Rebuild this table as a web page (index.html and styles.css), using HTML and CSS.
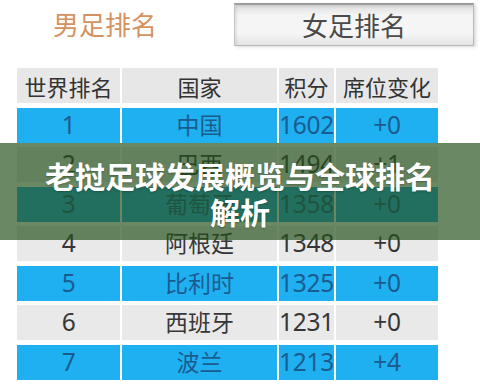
FILE: index.html
```html
<!DOCTYPE html>
<html lang="zh">
<head>
<meta charset="utf-8">
<title>老挝足球发展概览与全球排名解析</title>
<link rel="stylesheet" href="styles.css">
</head>
<body>
<div class="page">
  <div class="tabs">
    <div class="tab tab-active">男足排名</div>
    <div class="tab tab-other">女足排名</div>
  </div>
  <div class="table">
    <div class="cell head">世界排名</div>
    <div class="cell head">国家</div>
    <div class="cell head">积分</div>
    <div class="cell head">席位变化</div>

    <div class="cell blue num">1</div>
    <div class="cell blue">中国</div>
    <div class="cell blue num">1602</div>
    <div class="cell blue num">+0</div>

    <div class="cell gray num">2</div>
    <div class="cell gray">巴西</div>
    <div class="cell gray num">1494</div>
    <div class="cell gray num">+1</div>

    <div class="cell blue num">3</div>
    <div class="cell blue">葡萄牙</div>
    <div class="cell blue num">1358</div>
    <div class="cell blue num">+0</div>

    <div class="cell gray num">4</div>
    <div class="cell gray">阿根廷</div>
    <div class="cell gray num">1348</div>
    <div class="cell gray num">+0</div>

    <div class="cell blue num">5</div>
    <div class="cell blue">比利时</div>
    <div class="cell blue num">1325</div>
    <div class="cell blue num">+0</div>

    <div class="cell gray num">6</div>
    <div class="cell gray">西班牙</div>
    <div class="cell gray num">1231</div>
    <div class="cell gray num">+0</div>

    <div class="cell blue num">7</div>
    <div class="cell blue">波兰</div>
    <div class="cell blue num">1213</div>
    <div class="cell blue num">+4</div>
  </div>
  <div class="banner">
    <h1 class="banner-title">老挝足球发展概览与全球排名<br>解析</h1>
  </div>
</div>
</body>
</html>
```

FILE: styles.css
```css
* { box-sizing: border-box; }
html, body { margin: 0; padding: 0; }
body {
  width: 480px;
  height: 385px;
  overflow: hidden;
  background: #ffffff;
  font-family: "Noto Sans", "Noto Sans CJK SC", sans-serif;
}
.page {
  position: relative;
  width: 480px;
  height: 385px;
}
.tabs {
  display: flex;
  align-items: flex-start;
  height: 46px;
}
.tab {
  display: flex;
  align-items: center;
  justify-content: center;
  font-family: "Noto Sans CJK SC", sans-serif;
  font-size: 26px;
  line-height: 1;
}
.tab-active {
  width: 210px;
  height: 48px;
  color: #d5925e;
}
.tab-other {
  margin-left: 24px;
  margin-top: 3px;
  width: 240px;
  height: 43px;
  color: #4a4a4a;
  border: 1px solid #b8b8b8;
  border-top: 2px solid #9c9c9c;
  border-left-color: #c4c4c4;
  background: linear-gradient(180deg, #dedede 0%, #f4f4f4 25%, #f6f6f6 70%, #e4e4e4 100%);
  box-shadow: inset 2px 2px 2px rgba(0,0,0,0.08), 2px 1px 3px rgba(0,0,0,0.15);
}
.table {
  display: grid;
  grid-template-columns: 103px 155px 55px 102px;
  grid-template-rows: repeat(8, 35px);
  column-gap: 2px;
  row-gap: 4.5px;
  margin-left: 17px;
  margin-top: 22px;
  width: 421px;
}
.cell {
  display: flex;
  align-items: center;
  justify-content: center;
  font-size: 23px;
  line-height: 1;
  white-space: nowrap;
}
.num {
  font-size: 24.5px;
  letter-spacing: -0.3px;
}
.head {
  background: #e7e7e7;
  color: #333333;
  font-family: "Noto Sans CJK SC", sans-serif;
  font-size: 22px;
}
.blue {
  background: #1fb0f1;
  color: #1b5c8f;
}
.gray {
  background: #e9e9e9;
  color: #363636;
}
.banner {
  position: absolute;
  left: 0;
  top: 143px;
  width: 480px;
  height: 97px;
  background: rgba(35, 80, 25, 0.68);
  display: flex;
  align-items: center;
  justify-content: center;
}
.banner-title {
  margin: 0;
  padding-top: 3px;
  color: #ffffff;
  font-family: "Noto Sans CJK SC", sans-serif;
  font-weight: 700;
  font-size: 30px;
  line-height: 36px;
  text-align: center;
  text-shadow: 0 1px 2px rgba(0,0,0,0.25);
}
```
